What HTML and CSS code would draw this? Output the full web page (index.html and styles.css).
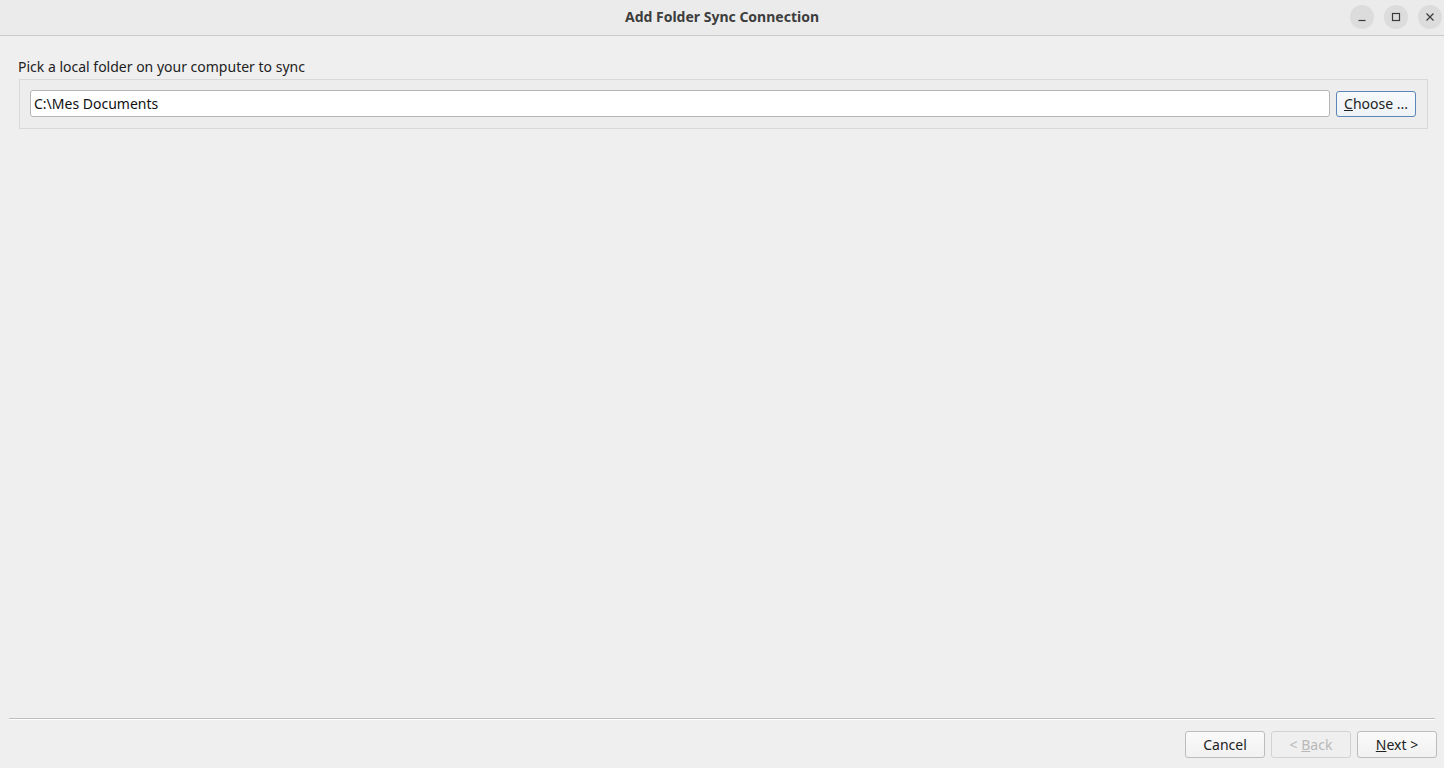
FILE: index.html
```html
<!DOCTYPE html>
<html>
	<head>
		<meta charset="utf-8" />
		<title>Add Folder Sync Connection</title>
		<link rel="stylesheet" href="styles.css">
	</head>
	<body>
		<div id="window">
			<div id="titlebar">
				<div class="title">Add Folder Sync Connection</div>
				<div class="controls">
					<span class="ctl">
						<svg width="10" height="10" viewBox="0 0 10 10"><path d="M1.5 8.5h7" stroke="#3a3a3a" stroke-width="1.2"/></svg>
					</span>
					<span class="ctl">
						<svg width="10" height="10" viewBox="0 0 10 10"><rect x="1.5" y="1.5" width="7" height="7" fill="none" stroke="#3a3a3a" stroke-width="1.2"/></svg>
					</span>
					<span class="ctl">
						<svg width="10" height="10" viewBox="0 0 10 10"><path d="M1.5 1.5l7 7M8.5 1.5l-7 7" stroke="#3a3a3a" stroke-width="1.2"/></svg>
					</span>
				</div>
			</div>
			<div id="page">
				<div class="label">Pick a local folder on your computer to sync</div>
				<div class="group">
					<input type="text" class="path" value="C:\Mes Documents" />
					<button class="btn default"><u>C</u>hoose ...</button>
				</div>
			</div>
			<div id="footer">
				<div class="sep"></div>
				<div class="buttons">
					<button class="btn">Cancel</button>
					<button class="btn" disabled>&lt; <u>B</u>ack</button>
					<button class="btn"><u>N</u>ext &gt;</button>
				</div>
			</div>
		</div>
	</body>
</html>
```

FILE: styles.css
```css
*{margin:0;padding:0;box-sizing:border-box}
html,body{height:100%}
body{font-family:"Noto Sans","Open Sans",sans-serif;font-size:14px;color:#222;background:#efefef;overflow:hidden}
#window{height:768px;display:flex;flex-direction:column}
#titlebar{height:36px;background:#ebebeb;border-bottom:1px solid #c9c9c9;display:flex;align-items:center;justify-content:center;position:relative;padding-bottom:2px}
#titlebar .title{font-weight:bold;font-size:14px;color:#3d3d3d}
.controls{position:absolute;right:2px;top:5px;display:flex;gap:10px}
.ctl{width:24px;height:24px;border-radius:50%;background:#dcdcdc;display:flex;align-items:center;justify-content:center}
#page{flex:1;padding:22px 16px 0 18px}
.label{line-height:18px;margin-bottom:3px}
.group{margin-left:1px;border:1px solid #d9d9d9;background:#ededed;padding:10px 11px 11px 10px;display:flex;gap:6px;align-items:center}
.path{flex:1;height:27px;border:1px solid #b5b5b5;border-radius:3px;background:#fff;font:inherit;color:#111;padding:0 3px;outline:none}
.btn{height:26px;width:80px;font:inherit;color:#222;border:1px solid #bcbcbc;border-radius:3px;background:linear-gradient(#fafafa,#f1f1f1)}
.btn.default{border-color:#5b86b8;background:linear-gradient(#f7f9fb,#eef2f6)}
.btn:disabled{color:#b8b8b8;border-color:#d2d2d2;background:#efefef}
.btn:disabled u{text-decoration-color:#b8b8b8}
#footer{padding:0 7px 10px 9px}
.sep{height:2px;border-top:1px solid #bdbdbd;border-bottom:1px solid #fff;margin-right:2px}
.buttons{display:flex;justify-content:flex-end;gap:6px;margin-top:11px}
.buttons .btn{height:27px}
```
